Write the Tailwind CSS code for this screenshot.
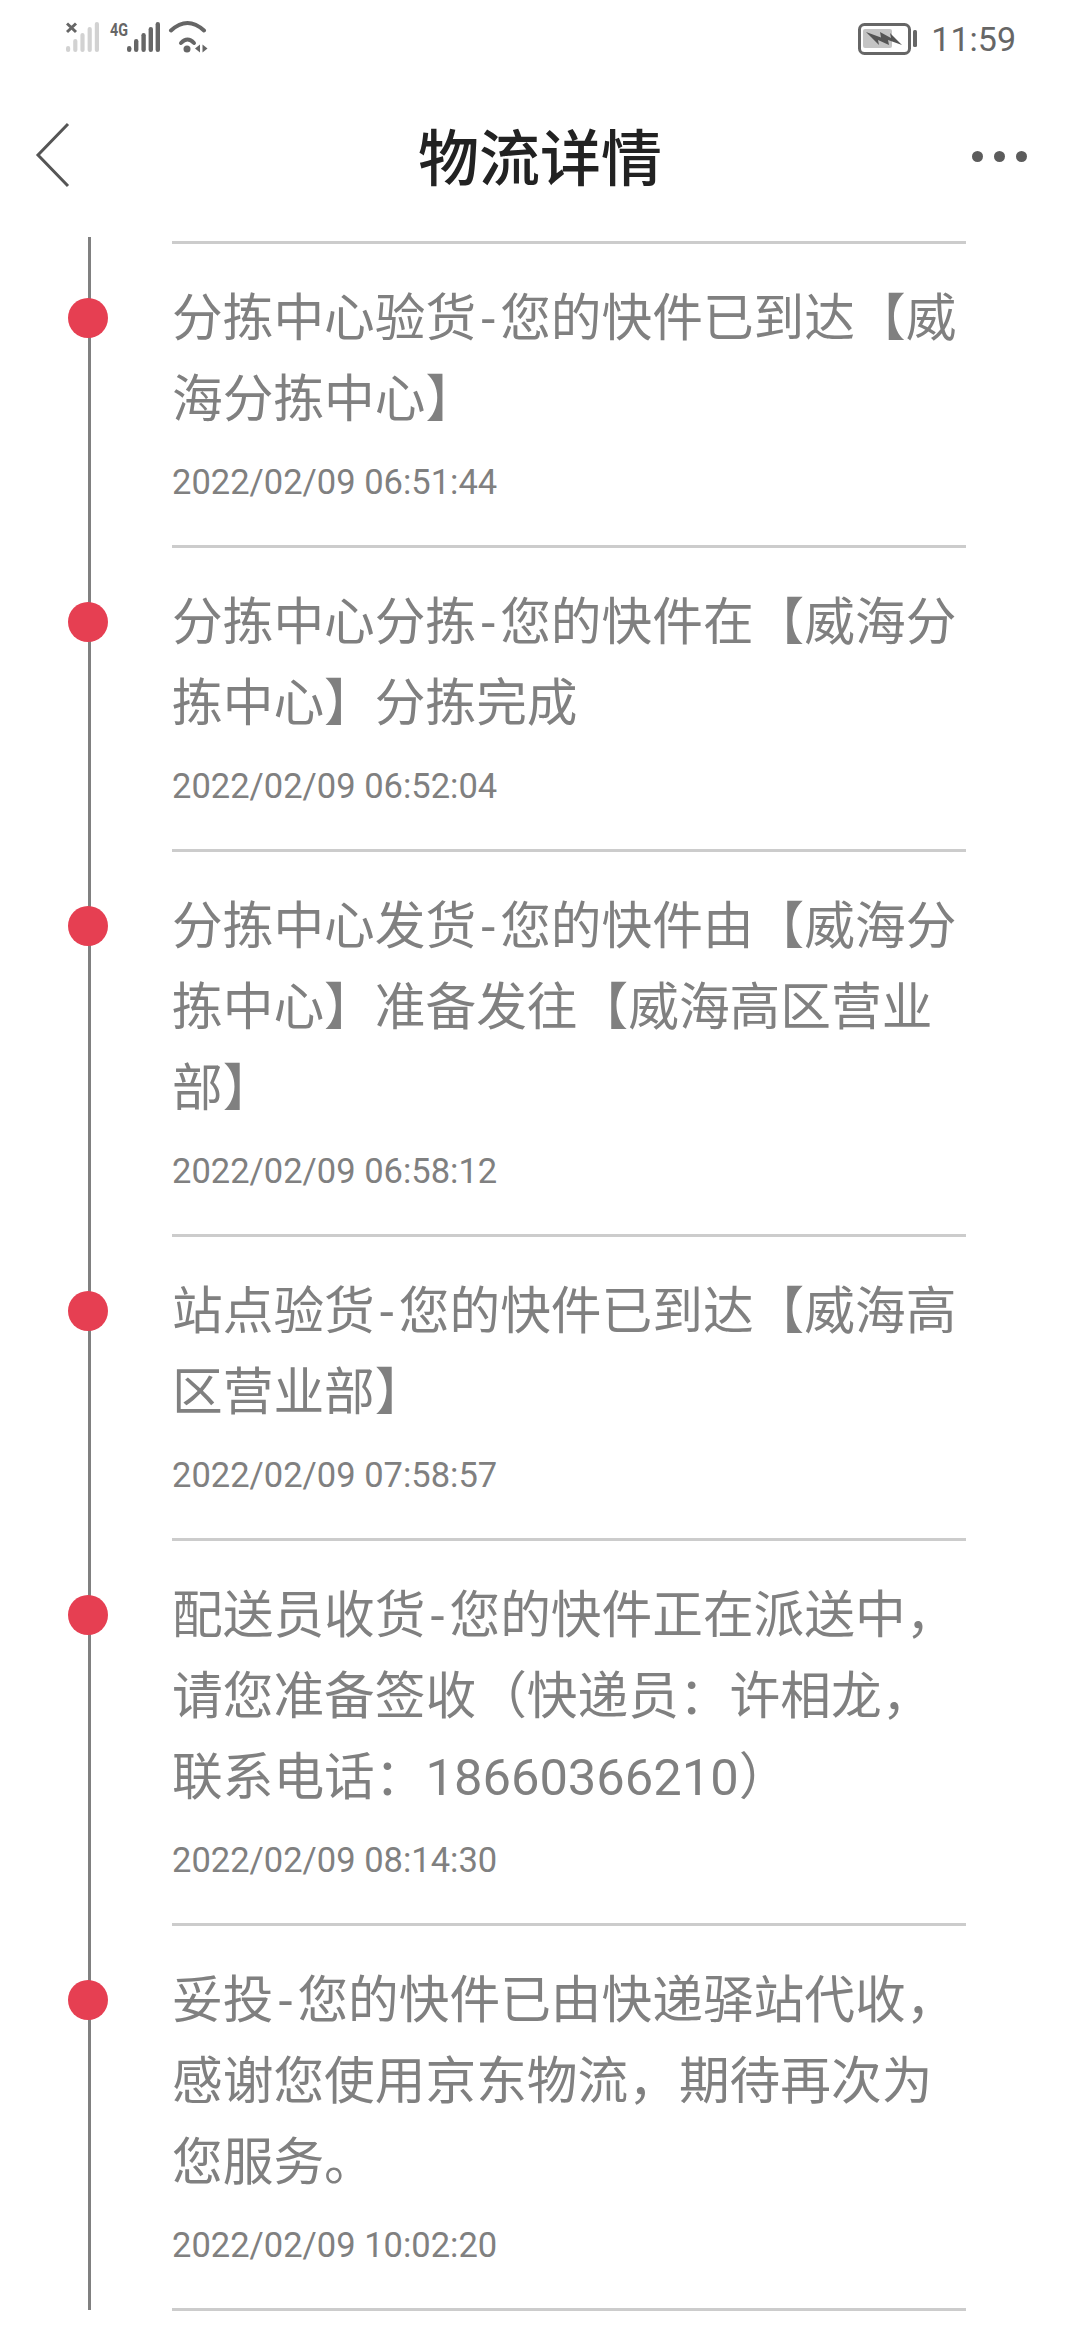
<!DOCTYPE html>
<html lang="zh-CN">
<head>
<meta charset="utf-8">
<title>物流详情</title>
<script src="https://cdn.jsdelivr.net/npm/@tailwindcss/browser@4"></script>
</head>
<body class="bg-white font-['Roboto','Noto_Sans_CJK_SC',sans-serif]">
<div class="w-[1080px] h-[2340px] overflow-hidden">

    <!-- Barra de status -->
    <div class="h-[76px] pl-[66px] pr-[64px] flex items-center justify-between">
        <svg width="150" height="36" viewBox="66 20 150 36" fill="none">
            <path d="M67 23.500l9 8.500M76 23.500l-9 8.500" stroke="#666" stroke-width="3"/>
            <g fill="#d2d2d2">
                <rect x="66" y="46" width="4.200" height="6" rx="2.100"/>
                <rect x="73.200" y="39" width="4.200" height="13" rx="2.100"/>
                <rect x="80.400" y="33" width="4.200" height="19" rx="2.100"/>
                <rect x="87.600" y="27" width="4.200" height="25" rx="2.100"/>
                <rect x="94.800" y="22" width="4.200" height="30" rx="2.100"/>
            </g>
            <text x="110" y="36" font-size="18" font-weight="700" fill="#666" font-family="Roboto" textLength="18" lengthAdjust="spacingAndGlyphs">4G</text>
            <g fill="#666">
                <rect x="127" y="46" width="4.400" height="6" rx="2.200"/>
                <rect x="134" y="39" width="4.400" height="13" rx="2.200"/>
                <rect x="141.400" y="33" width="4.400" height="19" rx="2.200"/>
                <rect x="148.600" y="27" width="4.400" height="25" rx="2.200"/>
                <rect x="155.600" y="22" width="4.400" height="30" rx="2.200"/>
            </g>
            <g stroke="#666" stroke-width="4" stroke-linecap="round">
                <path d="M171 30.500Q187.500 15.500 204 30.500"/>
                <path d="M181 43Q187.500 36 194 43"/>
            </g>
            <circle cx="187" cy="49" r="3.500" fill="#666"/>
            <path d="M200 44.500v8l-5-4zM202.500 44.500l5 4-5 4z" fill="#666"/>
        </svg>
        <div class="flex items-center gap-[13px]">
            <svg width="60" height="33" viewBox="859 21 60 33" fill="none">
                <rect x="860.500" y="23.500" width="50" height="29" rx="5" stroke="#666" stroke-width="3"/>
                <rect x="864" y="28" width="29" height="19" rx="2" fill="#c4c4c4"/>
                <path d="M867 31l15 5.500-1-5.500 11 6-1-5 12 12-14-5 1 5-11-5 1 5z" fill="#555"/>
                <rect x="914" y="29" width="4" height="17" rx="1.500" fill="#666"/>
            </svg>
            <span class="text-[34px] leading-none pt-[2px] text-[#666]">11:59</span>
        </div>
    </div>

    <!-- Cabecalho -->
    <div class="h-[164px] relative flex items-center justify-center pt-[5px]">
        <svg class="absolute left-[35px] top-[46px]" width="36" height="66" viewBox="0 0 36 66" fill="none">
            <path d="M33 2L3 33l30 31" stroke="#555" stroke-width="3"/>
        </svg>
        <h1 class="text-[61px] leading-none text-[#222] font-medium">物流详情</h1>
        <div class="absolute right-[53px] top-[75px] flex gap-[11px]">
            <span class="w-[11px] h-[11px] rounded-full bg-[#5c5c5c]"></span>
            <span class="w-[11px] h-[11px] rounded-full bg-[#5c5c5c]"></span>
            <span class="w-[11px] h-[11px] rounded-full bg-[#5c5c5c]"></span>
        </div>
    </div>

    <!-- Linha do tempo -->
    <div class="relative pt-[1px]">
        <div class="absolute left-[88px] top-[-3px] w-[3px] h-[2073px] bg-[#808080]"></div>

        <div class="flex">
            <div class="w-[172px] relative"><span class="absolute left-[68px] top-[57px] w-[40px] h-[40px] rounded-full bg-[#e63f52]"></span></div>
            <div class="w-[794px] border-t-[3px] border-[#cccccc] pt-[34px] pb-[43px]">
                <p class="text-[50.700px] leading-[81px] text-[#808080]">分拣中心验货<span class="mx-[5px]">-</span>您的快件已到达【威海分拣中心】</p>
                <p class="text-[34.500px] leading-[40px] mt-[22px] text-[#808080]">2022/02/09 06:51:44</p>
            </div>
        </div>

        <div class="flex">
            <div class="w-[172px] relative"><span class="absolute left-[68px] top-[57px] w-[40px] h-[40px] rounded-full bg-[#e63f52]"></span></div>
            <div class="w-[794px] border-t-[3px] border-[#cccccc] pt-[34px] pb-[43px]">
                <p class="text-[50.700px] leading-[81px] text-[#808080]">分拣中心分拣<span class="mx-[5px]">-</span>您的快件在【威海分拣中心】分拣完成</p>
                <p class="text-[34.500px] leading-[40px] mt-[22px] text-[#808080]">2022/02/09 06:52:04</p>
            </div>
        </div>

        <div class="flex">
            <div class="w-[172px] relative"><span class="absolute left-[68px] top-[57px] w-[40px] h-[40px] rounded-full bg-[#e63f52]"></span></div>
            <div class="w-[794px] border-t-[3px] border-[#cccccc] pt-[34px] pb-[43px]">
                <p class="text-[50.700px] leading-[81px] text-[#808080]">分拣中心发货<span class="mx-[5px]">-</span>您的快件由【威海分拣中心】准备发往【威海高区营业部】</p>
                <p class="text-[34.500px] leading-[40px] mt-[22px] text-[#808080]">2022/02/09 06:58:12</p>
            </div>
        </div>

        <div class="flex">
            <div class="w-[172px] relative"><span class="absolute left-[68px] top-[57px] w-[40px] h-[40px] rounded-full bg-[#e63f52]"></span></div>
            <div class="w-[794px] border-t-[3px] border-[#cccccc] pt-[34px] pb-[43px]">
                <p class="text-[50.700px] leading-[81px] text-[#808080]">站点验货<span class="mx-[5px]">-</span>您的快件已到达【威海高区营业部】</p>
                <p class="text-[34.500px] leading-[40px] mt-[22px] text-[#808080]">2022/02/09 07:58:57</p>
            </div>
        </div>

        <div class="flex">
            <div class="w-[172px] relative"><span class="absolute left-[68px] top-[57px] w-[40px] h-[40px] rounded-full bg-[#e63f52]"></span></div>
            <div class="w-[794px] border-t-[3px] border-[#cccccc] pt-[34px] pb-[43px]">
                <p class="text-[50.700px] leading-[81px] text-[#808080]">配送员收货<span class="mx-[5px]">-</span>您的快件正在派送中，请您准备签收（快递员：许相龙，联系电话：18660366210）</p>
                <p class="text-[34.500px] leading-[40px] mt-[22px] text-[#808080]">2022/02/09 08:14:30</p>
            </div>
        </div>

        <div class="flex">
            <div class="w-[172px] relative"><span class="absolute left-[68px] top-[57px] w-[40px] h-[40px] rounded-full bg-[#e63f52]"></span></div>
            <div class="w-[794px] border-t-[3px] border-[#cccccc] pt-[34px] pb-[43px]">
                <p class="text-[50.700px] leading-[81px] text-[#808080]">妥投<span class="mx-[5px]">-</span>您的快件已由快递驿站代收，感谢您使用京东物流，期待再次为您服务。</p>
                <p class="text-[34.500px] leading-[40px] mt-[22px] text-[#808080]">2022/02/09 10:02:20</p>
            </div>
        </div>

        <div class="ml-[172px] w-[794px] border-t-[3px] border-[#cccccc]"></div>
    </div>
</div>
</body>
</html>
